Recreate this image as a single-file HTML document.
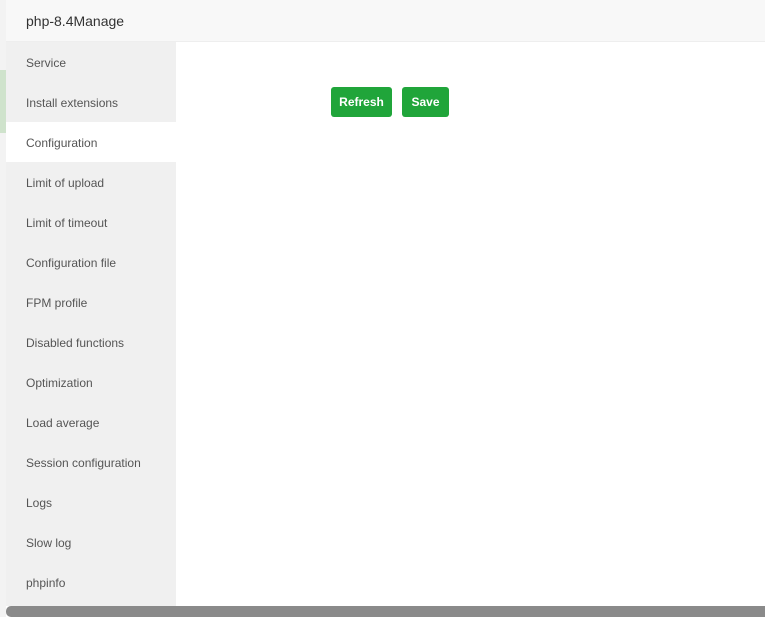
<!DOCTYPE html>
<html><head><style>
body{margin:0;width:765px;height:617px;overflow:hidden;background:#fff;font-family:"Liberation Sans",sans-serif;position:relative}
.strip{position:absolute;left:0;top:0;width:6px;height:617px;background:#f3f3f3}
.green{position:absolute;left:0;top:70px;width:6px;height:63px;background:#cfe3cc}
.modal{position:absolute;left:6px;top:0;width:759px;height:617px;background:#fff}
.hdr{height:41px;background:#f8f8f8;border-bottom:1px solid #eee;font-size:14px;color:#333;line-height:43px;padding-left:20px}
.side{position:absolute;left:0;top:42px;width:170px;height:564px;background:#f0f0f0}
.side div{height:40px;line-height:42px;padding-left:20px;font-size:12px;color:#555}
.side .act{background:#fff}
.btn{position:absolute;top:87px;height:30px;line-height:31px;background:#20a53a;color:#fff;font-size:12px;border-radius:3px;text-align:center;font-weight:bold}
.sb{position:absolute;left:6px;top:606px;width:759px;height:11px;background:#8a8a8a;border-radius:5px 0 0 5px}
</style></head><body>
<div class="strip"></div><div class="green"></div>
<div class="modal">
<div class="hdr">php-8.4Manage</div>
<div class="side">
<div>Service</div><div>Install extensions</div><div class="act">Configuration</div><div>Limit of upload</div><div>Limit of timeout</div><div>Configuration file</div><div>FPM profile</div><div>Disabled functions</div><div>Optimization</div><div>Load average</div><div>Session configuration</div><div>Logs</div><div>Slow log</div><div>phpinfo</div>
</div>
</div>
<div class="btn" style="left:331px;width:61px">Refresh</div>
<div class="btn" style="left:402px;width:47px">Save</div>
<div class="sb"></div>
</body></html>
